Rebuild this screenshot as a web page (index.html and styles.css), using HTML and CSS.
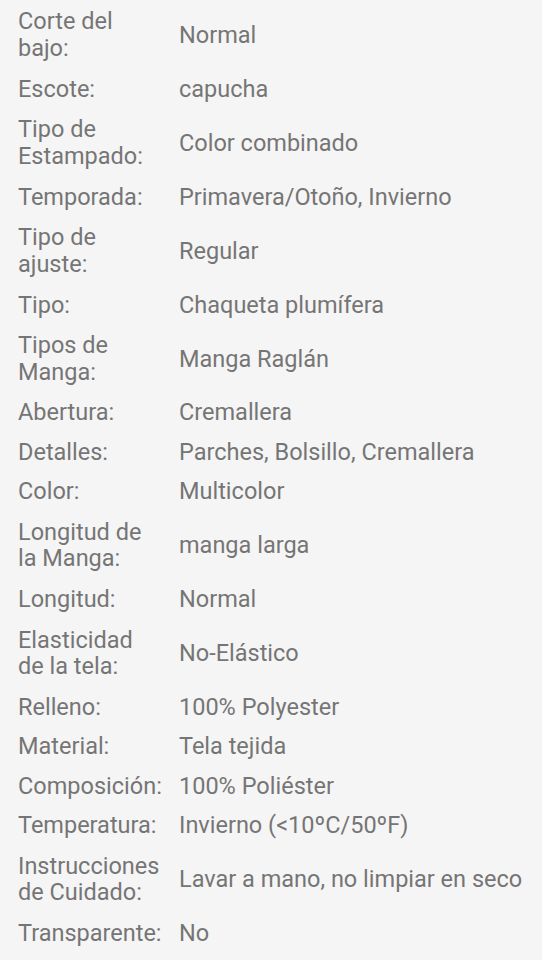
FILE: index.html
```html
<!DOCTYPE html>
<html lang="es">
<head>
  <meta charset="UTF-8">
  <title>Descripción del producto</title>
  <link rel="stylesheet" href="styles.css">
</head>
<body>

  <div class="specs">
    <div class="row tall"><span class="label">Corte del bajo:</span><span class="value">Normal</span></div>
    <div class="row"><span class="label">Escote:</span><span class="value">capucha</span></div>
    <div class="row tall"><span class="label">Tipo de Estampado:</span><span class="value">Color combinado</span></div>
    <div class="row"><span class="label">Temporada:</span><span class="value">Primavera/Otoño, Invierno</span></div>
    <div class="row tall"><span class="label">Tipo de ajuste:</span><span class="value">Regular</span></div>
    <div class="row"><span class="label">Tipo:</span><span class="value">Chaqueta plumífera</span></div>
    <div class="row tall"><span class="label">Tipos de Manga:</span><span class="value">Manga Raglán</span></div>
    <div class="row"><span class="label">Abertura:</span><span class="value">Cremallera</span></div>
    <div class="row"><span class="label">Detalles:</span><span class="value">Parches, Bolsillo, Cremallera</span></div>
    <div class="row"><span class="label">Color:</span><span class="value">Multicolor</span></div>
    <div class="row tall"><span class="label">Longitud de la Manga:</span><span class="value">manga larga</span></div>
    <div class="row"><span class="label">Longitud:</span><span class="value">Normal</span></div>
    <div class="row tall"><span class="label">Elasticidad de la tela:</span><span class="value">No-Elástico</span></div>
    <div class="row"><span class="label">Relleno:</span><span class="value">100% Polyester</span></div>
    <div class="row"><span class="label">Material:</span><span class="value">Tela tejida</span></div>
    <div class="row"><span class="label">Composición:</span><span class="value">100% Poliéster</span></div>
    <div class="row"><span class="label">Temperatura:</span><span class="value">Invierno (&lt;10ºC/50ºF)</span></div>
    <div class="row tall"><span class="label">Instrucciones de Cuidado:</span><span class="value">Lavar a mano, no limpiar en seco</span></div>
    <div class="row"><span class="label">Transparente:</span><span class="value">No</span></div>
  </div>

</body>
</html>
```

FILE: styles.css
```css
body {
  margin: 0;
  font-family: Roboto, "Noto Sans", sans-serif;
  background-color: #f5f5f5;
  color: #757575;
}

.specs {
  padding: 0.5px 0 0 18px;
}

.row {
  display: flex;
  align-items: center;
  padding: 6.4px 0;
  font-size: 23.5px;
  line-height: 26.5px;
}

/* rows whose label wraps onto two lines sit a little looser */
.row.tall {
  padding: 7.85px 0;
}

.label {
  width: 145px;
  flex-shrink: 0;
  margin-right: 16px;
}

.value {
  flex: 1;
}
```
